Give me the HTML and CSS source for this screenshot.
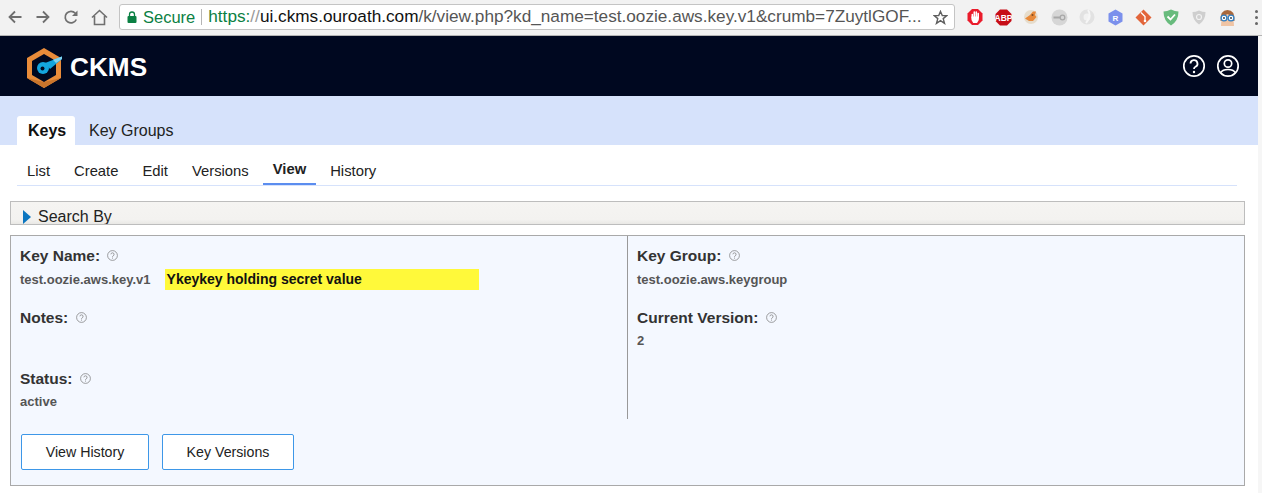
FILE: index.html
```html
<!DOCTYPE html>
<html lang="en">
<head>
	<meta charset="UTF-8">
	<title>CKMS</title>
	<link rel="stylesheet" href="styles.css">
</head>
<body>
	<div class="chrome">
		<div class="nav-btns">
			<svg width="16" height="16" viewBox="0 0 16 16"><path d="M14.500 8H2.500M8 2.500L2.500 8L8 13.500" fill="none" stroke="#6f6f6f" stroke-width="1.800"/></svg>
			<svg width="16" height="16" viewBox="0 0 16 16"><path d="M1.500 8H13.500M8 2.500L13.500 8L8 13.500" fill="none" stroke="#6f6f6f" stroke-width="1.800"/></svg>
			<svg width="16" height="16" viewBox="0 0 16 16"><path d="M13.300 10.500A5.800 5.800 0 1 1 12.300 4.200" fill="none" stroke="#6f6f6f" stroke-width="1.700"/><path d="M14.500 1.500V7H9z" fill="#6f6f6f"/></svg>
			<svg width="17" height="17" viewBox="0 0 17 17"><path d="M1 8.500L8.500 1.500L16 8.500M3.500 7V15.500H13.500V7" fill="none" stroke="#6f6f6f" stroke-width="1.600"/></svg>
		</div>
		<div class="omnibox">
			<svg class="lock" width="10" height="12" viewBox="0 0 10 12"><path d="M2.500 5V3.500a2.500 2.500 0 0 1 5 0V5" fill="none" stroke="#0b8043" stroke-width="1.300"/><rect x="0.500" y="5" width="9" height="7" rx="1" fill="#0b8043"/></svg>
			<span class="secure">Secure</span>
			<span class="omni-sep"></span>
			<span class="url"><span class="scheme">https:</span><span class="slashes">//</span><span class="host">ui.ckms.ouroath.com</span>/k/view.php?kd_name=test.oozie.aws.key.v1&amp;crumb=7ZuytlGOF...</span>
			<svg class="star" width="15" height="15" viewBox="0 0 16 16"><path d="M8 1.500L9.900 6H14.800L10.900 9.200L12.300 14.300L8 11.400L3.700 14.300L5.100 9.200L1.200 6H6.100z" fill="none" stroke="#5f5f5f" stroke-width="1.500"/></svg>
		</div>
		<div class="exts">
			<svg width="16" height="18" viewBox="0 0 16 18"><path d="M5 1H11L15.500 5.500V12.500L11 17H5L.5 12.500V5.500z" fill="#ea1c2c"/><path d="M4.500 8.500H11.800V12L10 15H6.200L4.500 12z" fill="#fff"/><path d="M5.300 10V6.500M7.300 10V4M9.300 10V4M11.200 10V5.500" stroke="#fff" stroke-width="1.600" stroke-linecap="round"/></svg>
			<svg width="17" height="17" viewBox="0 0 17 17"><path d="M5 .5H12L16.500 5V12L12 16.500H5L.5 12V5z" fill="#c70d17"/><text x="8.500" y="11.600" class="abp">ABP</text></svg>
			<svg width="16" height="16" viewBox="0 0 16 16"><circle cx="8" cy="8" r="7" fill="#e6dccb"/><path d="M2 9.500L7 6L10 2.500L13 2.500L12 6L13.500 8L10 12L6 12z" fill="#e8893a"/><circle cx="9.500" cy="6" r="1" fill="#7a4a22"/></svg>
			<svg width="17" height="17" viewBox="0 0 17 17"><circle cx="8.500" cy="8.500" r="8" fill="#d6d6d6"/><rect x="2.500" y="7.500" width="7" height="2" fill="#a8a8a8"/><circle cx="11.500" cy="8.500" r="2.300" fill="none" stroke="#a8a8a8" stroke-width="1.300"/></svg>
			<svg width="16" height="16" viewBox="0 0 16 16"><circle cx="8" cy="8" r="5.500" fill="none" stroke="#e2e2e2" stroke-width="4"/><path d="M9 1Q13 6 7 14" fill="none" stroke="#f6f6f6" stroke-width="2"/></svg>
			<svg width="15" height="17" viewBox="0 0 15 17"><path d="M7.500 .5L14.500 4.500V12.500L7.500 16.500L.5 12.500V4.500z" fill="#7b90ec"/><text x="7.500" y="11.500" class="ext-r">R</text></svg>
			<svg width="17" height="17" viewBox="0 0 17 17"><path d="M8.500 .5L16.500 8.500L8.500 16.500L.5 8.500z" fill="#e2653a"/><path d="M6 3.500L10 7.500V12M10 7.500" fill="none" stroke="#fff" stroke-width="1.300"/><circle cx="10" cy="12" r="1.300" fill="#fff"/></svg>
			<svg width="16" height="17" viewBox="0 0 16 17"><path d="M8 .5Q12 2.500 15.500 2.500Q15.500 12 8 16.500Q.5 12 .5 2.500Q4 2.500 8 .5z" fill="#68bb7d"/><path d="M4.500 7.500L7.500 10.500L12 5.500" fill="none" stroke="#fff" stroke-width="1.800"/></svg>
			<svg width="14" height="15" viewBox="0 0 14 15"><path d="M7 .5Q10.500 2 13.500 2Q13.500 10.500 7 14.500Q.5 10.500 .5 2Q3.500 2 7 .5z" fill="#cfcfcf"/><circle cx="7" cy="7" r="2.500" fill="none" stroke="#f2f2f2" stroke-width="1.200"/></svg>
			<svg width="17" height="17" viewBox="0 0 17 17"><path d="M1.500 12Q1 1 8.500 1Q16 1 15.500 12z" fill="#a9683c"/><path d="M2 17Q2 7 8.500 5Q15 7 15 17z" fill="#f0c4a4"/><circle cx="5" cy="9" r="2.900" fill="#fff" stroke="#2f7fc4" stroke-width="1.300"/><circle cx="12" cy="9" r="2.900" fill="#fff" stroke="#2f7fc4" stroke-width="1.300"/><circle cx="5" cy="9" r=".9" fill="#234"/><circle cx="12" cy="9" r=".9" fill="#234"/></svg>
		</div>
		<div class="kebab"><i></i><i></i><i></i></div>
	</div>

	<div class="page">
		<div class="main">
			<div class="header">
				<svg class="logo" width="36" height="40" viewBox="0 0 36 40">
					<path d="M18 0L35 10V30L18 40L1 30V10z" fill="#e98c3a"/>
					<path d="M18 34L35 30L18 40L1 30z" fill="#c9752c"/>
					<path d="M18 6L30 13V27L18 34L6 27V13z" fill="#000820"/>
					<path d="M19 15L36 8.500V11L24 21z" fill="#14a5de"/>
					<path d="M27 11.800L36 8.500V11L30 15z" fill="#7fd2ef"/>
					<circle cx="17" cy="20" r="6" fill="#14a5de"/>
					<circle cx="16.500" cy="20.500" r="2" fill="#000820"/>
				</svg>
				<span class="brand">CKMS</span>
				<div class="header-icons">
					<svg width="24" height="24" viewBox="0 0 24 24"><circle cx="12" cy="12" r="10.200" fill="none" stroke="#fff" stroke-width="1.700"/><path d="M8.500 9.500A3.500 3.500 0 1 1 13.500 12.800Q12 13.500 12 15" fill="none" stroke="#fff" stroke-width="1.800"/><circle cx="12" cy="18" r="1.200" fill="#fff"/></svg>
					<svg width="24" height="24" viewBox="0 0 24 24"><circle cx="12" cy="12" r="10.200" fill="none" stroke="#fff" stroke-width="1.700"/><circle cx="12" cy="9.500" r="3.700" fill="none" stroke="#fff" stroke-width="1.700"/><path d="M4.800 18.500Q6.500 15.500 12 15.500Q17.500 15.500 19.200 18.500" fill="none" stroke="#fff" stroke-width="1.700"/></svg>
				</div>
			</div>

			<div class="tabs">
				<a class="tab active">Keys</a>
				<a class="tab">Key Groups</a>
			</div>

			<div class="subnav">
				<a>List</a>
				<a>Create</a>
				<a>Edit</a>
				<a>Versions</a>
				<a class="current">View</a>
				<a>History</a>
			</div>

			<div class="search-by">
				<span class="arrow"></span>
				<span>Search By</span>
			</div>

			<div class="panel">
				<div class="cols">
					<div class="col col-left">
						<div class="field field-name">
							<div class="label">Key Name: <svg class="help"><use href="#help"/></svg></div>
							<div class="value-row">
								<span class="value">test.oozie.aws.key.v1</span>
								<span class="highlight">Ykeykey holding secret value</span>
							</div>
						</div>
						<div class="field field-notes">
							<div class="label">Notes: <svg class="help"><use href="#help"/></svg></div>
						</div>
						<div class="field">
							<div class="label">Status: <svg class="help"><use href="#help"/></svg></div>
							<div class="value">active</div>
						</div>
					</div>
					<div class="col col-right">
						<div class="field field-name">
							<div class="label">Key Group: <svg class="help"><use href="#help"/></svg></div>
							<div class="value-row"><span class="value">test.oozie.aws.keygroup</span></div>
						</div>
						<div class="field">
							<div class="label">Current Version: <svg class="help"><use href="#help"/></svg></div>
							<div class="value">2</div>
						</div>
					</div>
				</div>
				<div class="actions">
					<button class="btn btn-history">View History</button>
					<button class="btn btn-versions">Key Versions</button>
				</div>
			</div>
		</div>
		<div class="scrollbar"></div>
	</div>

	<svg width="0" height="0" class="defs">
		<symbol id="help" viewBox="0 0 11 11">
			<circle cx="5.500" cy="5.500" r="4.900" fill="none" stroke="#777" stroke-width=".7"/>
			<path d="M3.900 4.300A1.600 1.600 0 1 1 6.100 5.900Q5.500 6.200 5.500 6.900" fill="none" stroke="#777" stroke-width=".7"/>
			<circle cx="5.500" cy="8.100" r=".5" fill="#777"/>
		</symbol>
	</svg>
</body>
</html>
```

FILE: styles.css
```css
*{
	margin: 0;
	padding: 0;
	box-sizing: border-box;
}
html,body{
	height: 493px;
	overflow: hidden;
}
body{
	font-family: "Liberation Sans", Arial, sans-serif;
	color: #222;
	background: #fff;
}
.defs{
	display: block;
	height: 0;
}

/* browser toolbar */
.chrome{
	height: 36px;
	background: #f2f2f2;
	border-bottom: 1px solid #b5b5b5;
	display: flex;
	align-items: center;
	padding: 0 0 1px 7px;
}
.nav-btns{
	width: 112px;
	display: flex;
	align-items: center;
	gap: 12px;
}
.omnibox{
	width: 836px;
	height: 26px;
	background: #fff;
	border: 1px solid #c4c4c4;
	border-radius: 3px;
	display: flex;
	align-items: center;
	padding-left: 7px;
	white-space: nowrap;
}
.lock{
	margin-right: 6px;
}
.secure{
	color: #0b8043;
	font-size: 16.500px;
}
.omni-sep{
	width: 1px;
	height: 16px;
	background: #b5b5b5;
	margin: 0 6px;
}
.url{
	color: #555;
	flex: 1;
	font-size: 17.200px;
	margin-top: -2px;
}
.scheme{
	color: #0b8043;
}
.slashes{
	color: #999;
}
.host{
	color: #111;
}
.star{
	margin-right: 6px;
}
.exts{
	display: grid;
	grid-template-columns: repeat(10, 28px);
	justify-items: center;
	align-items: center;
	margin-left: 6px;
}
.abp{
	font: bold 8.500px "Liberation Sans", sans-serif;
	fill: #fff;
	text-anchor: middle;
}
.ext-r{
	font: bold 8px "Liberation Sans", sans-serif;
	fill: #fff;
	text-anchor: middle;
}
.kebab{
	margin-left: 14px;
	display: flex;
	flex-direction: column;
	gap: 3px;
}
.kebab i{
	display: block;
	width: 3px;
	height: 3px;
	border-radius: 50%;
	background: #666;
}

.page{
	display: flex;
}
.main{
	width: 1258px;
}
.scrollbar{
	width: 4px;
	height: 457px;
	background: #f6f6f6;
}

/* top bar */
.header{
	height: 60px;
	background: #000820;
	display: flex;
	align-items: center;
	padding: 0 18px 0 26px;
}
.logo{
	margin: 4px 8px 0 0;
}
.brand{
	color: #fff;
	font-size: 26.200px;
	font-weight: bold;
	margin-top: 3px;
}
.header-icons{
	margin-left: auto;
	display: flex;
	gap: 10px;
	margin-top: -1px;
}

/* tabs */
.tabs{
	height: 49px;
	background: #d6e2fb;
	display: flex;
	align-items: flex-end;
	padding-left: 17px;
	font-size: 16px;
}
.tab{
	height: 29px;
	line-height: 30px;
	padding: 0 10px 0 11px;
	margin-right: 3px;
	color: #222;
}
.tab.active{
	width: 58px;
	background: #fff;
	font-weight: bold;
	color: #111;
	border-radius: 3px 3px 0 0;
}

.subnav{
	height: 31px;
	margin: 10px 21px 0 17px;
	display: flex;
	font-size: 14.800px;
	border-bottom: 1px solid #d6e2fb;
}
.subnav a{
	height: 30px;
	line-height: 32px;
	padding: 0 10px;
	margin-right: 4px;
	color: #222;
}
.subnav a.current{
	font-weight: bold;
	line-height: 28px;
	border-bottom: 2px solid #5b8def;
}

.search-by{
	height: 24px;
	margin: 15px 13px 0 10px;
	border: 1px solid #bdbdbd;
	background: linear-gradient(#f5f4f2, #f3f2f0 80%, #e9e8e5);
	display: flex;
	align-items: center;
	font-size: 16px;
	line-height: 24px;
	padding: 8px 0 0 12px;
	overflow: hidden;
}
.arrow{
	width: 0;
	height: 0;
	border-left: 8px solid #0c76c0;
	border-top: 7px solid transparent;
	border-bottom: 7px solid transparent;
	margin-right: 7px;
}

.panel{
	height: 251px;
	margin: 10px 13px 0 10px;
	border: 1px solid #a9a9a9;
	background: #f4f8ff;
}
.cols{
	display: flex;
	height: 183px;
}
.col{
	padding-top: 11px;
}
.col-left{
	width: 617px;
	padding-left: 9px;
	border-right: 1px solid #999;
}
.col-right{
	padding-left: 9px;
}
.field-name{
	height: 62px;
}
.field-notes{
	height: 61px;
}
.label{
	font-size: 15.500px;
	font-weight: bold;
	color: #333;
	line-height: 17px;
}
.help{
	width: 11px;
	height: 11px;
	margin-left: 3px;
}
.value,.value-row{
	font-size: 13px;
	font-weight: bold;
	color: #555;
}
div.value{
	margin-top: 7px;
}
.value-row{
	display: flex;
	align-items: center;
	gap: 14px;
	margin-top: 5px;
	height: 21px;
}
.highlight{
	width: 314px;
	height: 21px;
	line-height: 21px;
	padding-left: 2px;
	background: #fff93a;
	color: #111;
	font-size: 14px;
}
.actions{
	display: flex;
	gap: 13px;
	padding: 15px 0 0 10px;
}
.btn{
	height: 36px;
	background: #fff;
	border: 1px solid #3d97e8;
	border-radius: 2px;
	font-family: inherit;
	font-size: 14.200px;
	color: #222;
}
.btn-history{
	width: 128px;
}
.btn-versions{
	width: 132px;
}
```
